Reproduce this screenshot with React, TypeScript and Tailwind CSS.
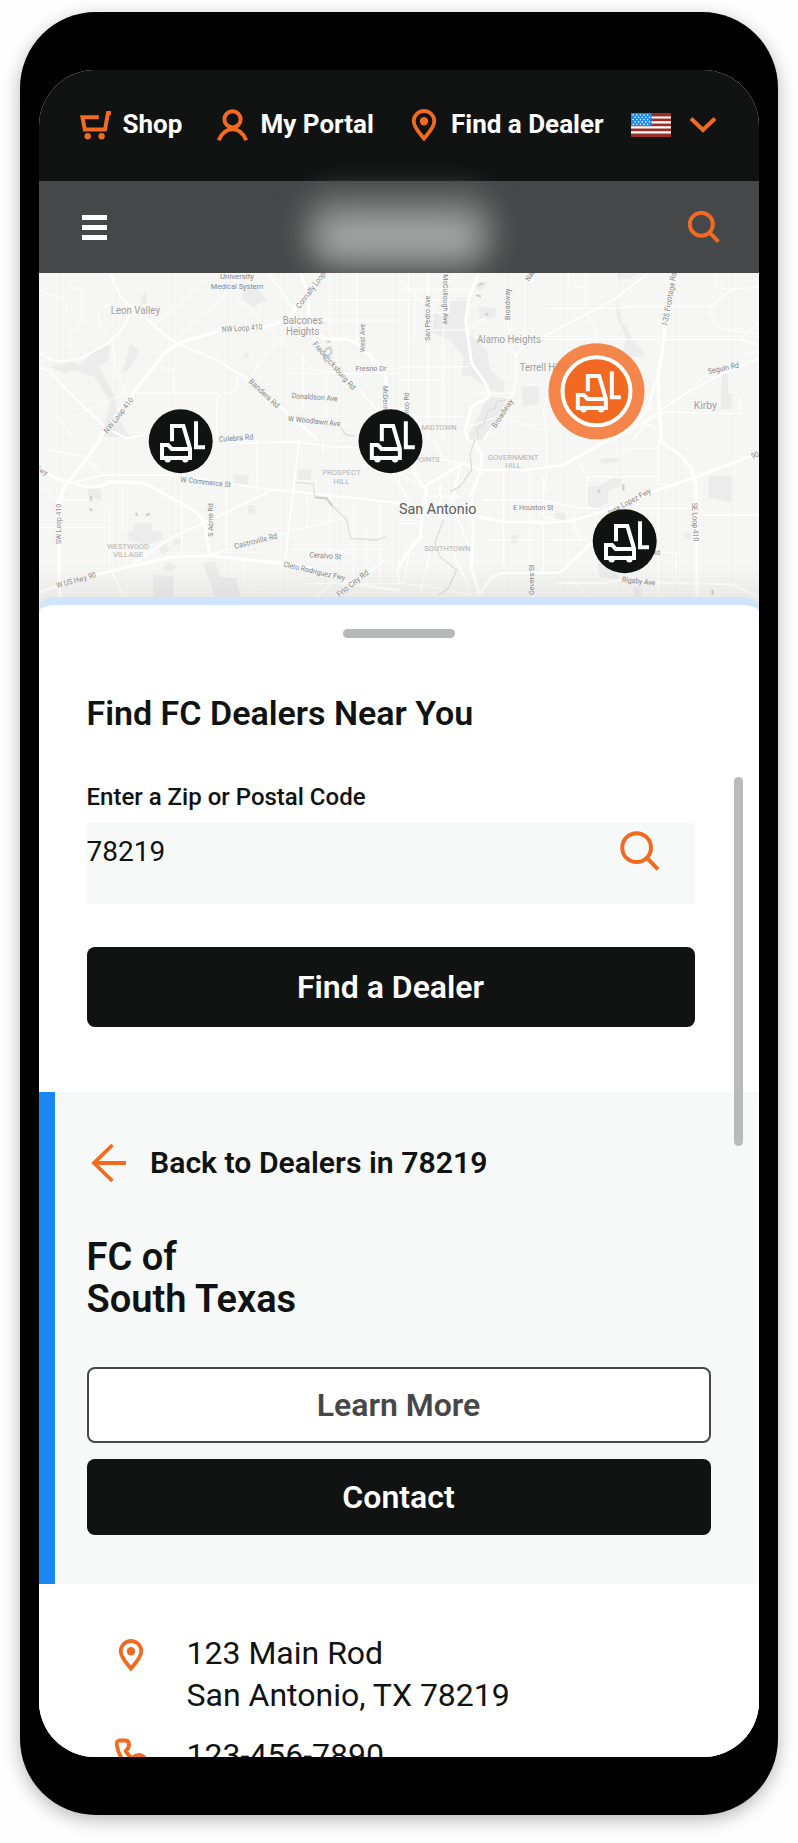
import type { ReactNode } from 'react';

type Label = {
  text: string;
  x: number;
  y: number;
  w: number;
  rot?: number;
  kind?: 'road' | 'town' | 'area' | 'city';
};

type Road = { d: string; w: number };

interface TileProps {
  x: number;
  y: number;
  roads: Road[];
  patches: string[];
  water?: string[];
}

const LABEL_STYLE = {
  road: { size: 23, fill: '#868686' },
  town: { size: 30, fill: '#9f9f9f' },
  area: { size: 21, fill: '#b3b3b3' },
  city: { size: 44, fill: '#5c5c5c' },
};

const nwRoads: Road[] = [
  { d: 'M205 510 L300 380 L395 260 Q425 228 460 215 L575 180 L660 172 Q735 170 762 150 L790 125 L880 15', w: 10 },
  { d: 'M812 10 L835 70 L835 130 Q850 205 900 208 L950 208 Q980 215 1010 245 L1060 300 Q1070 320 1068 350 V510', w: 9 },
  { d: 'M240 10 L275 85 L370 165 L430 215 L560 270 L650 325 L740 400 L800 455 L865 510', w: 6 },
  { d: 'M25 245 Q60 275 100 275 L160 262 L240 215 L270 185 L310 120 L280 90', w: 5 },
  { d: 'M25 290 L60 305 L130 380 L230 475 L290 505 L360 490', w: 5 },
  { d: 'M850 205 L910 290 L980 350 L1040 420', w: 5 },
  { d: 'M620 90 L680 135 L690 160 L740 200 L800 250 L850 300 L1000 315', w: 3 },
  { d: 'M715 10 L760 70 L790 120', w: 4 },
  { d: 'M430 215 L560 100 L640 10 M540 10 L430 120 L370 165', w: 3 },
  { d: 'M240 105 Q190 110 215 170 L250 210 L255 290 L285 370 L560 370 L580 390', w: 3 },
  { d: 'M25 60 L110 90 L110 130 M120 50 L155 60 V160 L120 190 V240', w: 3 },
  { d: 'M660 325 L690 275 L760 200 L800 120 M560 510 V380 L620 360 V300', w: 3 },
  { d: 'M430 370 V300 L390 290 M130 440 L285 370 M130 510 L80 430', w: 3 },
  { d: 'M900 10 V200 M980 10 V215 M900 90 H1110 M860 150 H1110 M820 250 V420 M890 300 V440 M770 310 H1110', w: 3 },
];

const neRoads: Road[] = [
  { d: 'M237 10 L208 80 L197 150 L205 210 L215 280 L250 330 Q275 370 262 385 L215 410 L195 480 L205 510', w: 9 },
  { d: 'M827 10 L797 150 L785 260 L775 310 V380 L785 510', w: 9 },
  { d: 'M775 315 L740 420 L700 470 L640 510', w: 8 },
  { d: 'M745 10 L640 90 L560 132 L420 205 L370 230 L345 260 L350 320 L340 370 L270 480 L250 510', w: 5 },
  { d: 'M1075 265 L940 325 L860 370 L790 415 L700 475', w: 5 },
  { d: 'M790 415 L850 375 L925 310 L1075 240', w: 3 },
  { d: 'M440 115 H640 L700 110 H940 Q960 75 1010 55', w: 4 },
  { d: 'M430 208 H1020 L1075 160 M1020 208 L1075 225', w: 4 },
  { d: 'M565 132 L590 190 V220 M555 10 V110 M505 10 V50 H560', w: 3 },
  { d: 'M85 10 V510 M25 10 V510 M130 10 V510 M45 60 V200 M325 150 V230 L350 260 M375 20 V220', w: 3 },
  { d: 'M0 60 H210 M0 90 H200 M100 180 H200 L260 140 M0 290 H210 M0 330 H130 M0 440 H190 M230 370 H340', w: 3 },
  { d: 'M700 510 L740 455 L800 425 L900 430 H1020 V380 M720 450 L770 480', w: 4 },
  { d: 'M930 110 Q930 170 980 180 L1075 190 M950 10 Q930 50 990 60 L1075 50 M440 510 L430 420 L440 380', w: 3 },
  { d: 'M0 30 L60 90 L130 140 M230 200 H470 M210 470 L290 440 L430 480', w: 3 },
];

const swRoads: Road[] = [
  { d: 'M210 0 L120 120 Q88 155 88 200 V470', w: 10 },
  { d: 'M25 85 L80 115 L130 130 Q200 155 240 125 L345 130 L490 210 Q530 240 530 290 L540 347', w: 9 },
  { d: 'M25 458 L150 415 L300 380 L420 352 L540 347 L640 358 L760 372 L850 385 L960 430 L1060 445 L1110 450', w: 9 },
  { d: 'M290 385 L430 290 L520 250 L725 150 L800 155 L1110 190', w: 6 },
  { d: 'M560 0 L640 10 L800 5 L900 20 L1110 25', w: 5 },
  { d: 'M808 0 L790 150 L765 370', w: 5 },
  { d: 'M245 395 L280 470 M85 420 L95 470', w: 5 },
  { d: 'M540 345 L620 320 L780 275 L940 235', w: 4 },
  { d: 'M860 470 L910 425 M920 470 L1065 360 M1110 360 Q1095 400 1110 430', w: 5 },
  { d: 'M215 105 H440 L600 130 L725 150 M120 130 L220 105 L160 50 L60 30', w: 4 },
  { d: 'M25 262 H238 V200 L200 180 H95 M238 262 V380 M278 130 V270 M455 150 V345', w: 3 },
  { d: 'M590 130 V340 M640 358 V430 L690 450 M680 0 V160 M900 160 V330 L960 340 M970 180 V440 M1050 190 V440 M830 170 V260', w: 3 },
  { d: 'M780 330 H1060 M820 430 H1110 M1010 260 V440 M880 0 V40 M25 140 Q60 150 85 185', w: 3 },
];

const seRoads: Road[] = [
  { d: 'M625 0 L490 75 L380 90 L240 90 L190 70 L80 135 L68 220 L60 290 L20 340 L0 380', w: 8 },
  { d: 'M215 0 L245 40 L240 100 L215 160 L220 270 L215 390 L240 465', w: 9 },
  { d: 'M150 215 L310 245 L440 248 Q500 248 540 235 L640 205 L760 155 L890 110 L1075 40', w: 8 },
  { d: 'M775 0 L840 45 Q885 90 887 130 L890 210 V470', w: 9 },
  { d: 'M240 460 L265 425 Q285 400 310 400 L470 398 Q490 395 500 380 L575 310 L600 290', w: 8 },
  { d: 'M470 430 L620 428 L680 415 L800 430 L990 432 L1075 470', w: 6 },
  { d: 'M120 135 V230 M75 170 H180 M180 80 L150 215 M35 90 L80 150 L75 220', w: 7 },
  { d: 'M250 180 H420 L540 205 H600 M430 250 V400 M430 110 V230 L520 250 L540 300', w: 4 },
  { d: 'M775 0 V130 L820 135 L890 110 M775 180 V470 M560 200 L560 110 H770 M720 205 H880 M890 225 H1075', w: 4 },
  { d: 'M775 337 H828 V430 M640 40 L700 25 H770 M530 60 L560 110 M440 0 V100 L430 170', w: 3 },
  { d: 'M390 90 V470 M310 90 V380 M250 300 H420 M440 300 H560 M0 430 L90 440 L210 465 M500 400 L560 470', w: 3 },
  { d: 'M70 290 L30 330 L10 430 M170 230 L210 330 M90 340 L60 460 M160 340 L210 450 M0 250 H60', w: 4 },
  { d: 'M0 100 L80 150 M20 0 V60 L60 110 M100 0 L130 60 L190 70 M-70 40 L-20 100 L30 190', w: 4 },
];

const nwPatches = [
  'M60 290 L120 275 L150 285 L190 245 L240 225 L235 270 L205 290 L225 320 L255 380 L260 440 L300 500 H215 L240 400 L195 320 L130 300 L110 312 Z',
  'M300 220 L330 240 L295 300 L275 310 L290 265 Z',
  'M640 60 L680 50 L710 90 L670 110 L635 85 Z',
  'M330 80 L350 70 L350 100 L335 105 Z',
  'M645 245 l12 5 l-5 18 l-10 -5 Z',
];

const nePatches = [
  'M150 90 L200 80 L195 190 L220 200 L260 240 L270 300 L315 340 L310 370 L270 360 L215 320 L185 315 L190 260 L150 210 L100 190 L100 130 L150 130 Z',
  'M225 40 L260 35 L250 60 L230 60 Z',
  'M235 110 L290 115 L285 145 L240 145 Z',
  'M650 80 L665 150 L700 210 L735 250 L730 262 L665 255 L680 205 L650 140 Z',
  'M365 350 H418 V400 L370 410 Z',
  'M965 310 H985 V370 H995 V417 H963 Z',
  'M260 380 L320 385 L300 430 L250 510 H200 L240 430 Z',
  'M650 10 H710 L690 28 H655 Z',
];

const swPatches = [
  'M175 145 H213 V185 H175 Z',
  'M310 250 H366 V275 H395 V300 L350 315 L295 300 V275 H310 Z',
  'M612 103 L656 105 L653 135 L610 132 Z',
  'M803 88 H843 V120 L805 118 Z',
  'M655 195 l18 0 l4 25 l-24 4 Z',
  'M370 405 L430 408 V470 H370 Z',
  'M520 370 L555 362 L570 410 L620 415 L630 470 H555 Z',
  'M415 365 L440 380 L420 395 L400 385 Z',
  'M385 320 l20 -10 l12 20 l-20 15 Z M430 300 l22 -5 v15 l-22 8 Z',
];

const sePatches = [
  'M562 142 L600 135 L640 115 L665 118 L660 140 L625 150 L625 185 L590 208 L562 195 Z',
  'M925 108 H995 V188 L925 172 Z',
  'M602 58 L655 52 L655 65 L605 70 Z',
  'M463 218 H495 V245 H463 Z',
  'M333 285 h22 v24 h-22 Z',
  'M590 360 L640 380 L660 420 L600 410 Z',
  'M852 278 h22 v18 h-22 Z',
  'M700 440 l20 0 l5 30 l-22 0 Z',
];

const tiles: TileProps[] = [
  {
    x: 30,
    y: 270,
    roads: nwRoads,
    patches: nwPatches,
    water: ['M890 215 l12 0 M885 240 l15 -8 l5 15 l-12 12 M880 262 l8 16', 'M935 475 l12 18 l25 5 M940 490 l20 8'],
  },
  {
    x: 400,
    y: 270,
    roads: neRoads,
    patches: nePatches,
    water: ['M235 45 l15 -5 M228 75 l15 5 M255 130 l10 5', 'M315 390 l-25 5 l-5 20 l-20 5 l-15 45 l-20 10 l5 30'],
  },
  {
    x: 30,
    y: 440,
    roads: swRoads,
    patches: swPatches,
    water: [
      'M183 168 v14 M180 205 l5 8 M320 218 v10 M348 226 l12 -6 M855 172 L890 175 L908 200',
      'M798 127 L850 132 L855 175 M910 200 L950 240 L962 295 L1040 300 L1070 290',
    ],
  },
  {
    x: 400,
    y: 440,
    roads: seRoads,
    patches: sePatches,
    water: [
      'M670 132 v20 M938 450 v14 M597 148 v10',
      'M225 0 L210 40 L215 90 L180 140 L150 155 M130 240 L105 310 L120 350 L170 390 L145 445 L115 465',
    ],
  },
];

const labels: { x: number; y: number; items: Label[] }[] = [
  {
    x: 30,
    y: 270,
    items: [
      { text: 'University', x: 621, y: 20, w: 102 },
      { text: 'Medical System', x: 621, y: 48, w: 158 },
      { text: 'Leon Valley', x: 316, y: 121, w: 148, kind: 'town' },
      { text: 'Balcones', x: 818, y: 151, w: 120, kind: 'town' },
      { text: 'Heights', x: 818, y: 186, w: 100, kind: 'town' },
      { text: 'NW Loop 410', x: 636, y: 174, w: 122, rot: -4 },
      { text: 'NW Loop 410', x: 265, y: 436, w: 128, rot: -52 },
      { text: 'Connally Loop', x: 842, y: 60, w: 130, rot: -53 },
      { text: 'Fredericksburg Rd', x: 913, y: 287, w: 184, rot: 49 },
      { text: 'West Ave', x: 996, y: 204, w: 84, rot: -90 },
      { text: 'Fresno Dr', x: 1023, y: 296, w: 93 },
      { text: 'Donaldson Ave', x: 854, y: 381, w: 138, rot: 4 },
      { text: 'W Woodlawn Ave', x: 853, y: 453, w: 158, rot: 6 },
      { text: 'Bandera Rd', x: 703, y: 370, w: 116, rot: 43 },
      { text: 'McDermott', x: 1068, y: 397, w: 98, rot: 90 },
      { text: 'Culebra Rd', x: 618, y: 504, w: 104, rot: -4 },
    ],
  },
  {
    x: 400,
    y: 270,
    items: [
      { text: 'San Pedro Ave', x: 83, y: 145, w: 135, rot: -90 },
      { text: 'McCullough Ave', x: 137, y: 88, w: 150, rot: 90 },
      { text: 'Broadway', x: 323, y: 103, w: 94, rot: -90 },
      { text: 'Broadway', x: 307, y: 430, w: 98, rot: -57 },
      { text: 'Nac', x: 390, y: 16, w: 36, rot: -57 },
      { text: 'Alamo Heights', x: 327, y: 208, w: 192, kind: 'town' },
      { text: 'Terrell Hills', x: 430, y: 292, w: 142, kind: 'town' },
      { text: 'I-35 Frontage Rd', x: 808, y: 86, w: 160, rot: -80 },
      { text: 'Seguin Rd', x: 970, y: 294, w: 95, rot: -12 },
      { text: 'Kirby', x: 916, y: 407, w: 70, kind: 'town' },
      { text: 'MIDTOWN', x: 117, y: 473, w: 105, kind: 'area' },
      { text: 'Blanco Rd', x: 18, y: 413, w: 92, rot: -90 },
    ],
  },
  {
    x: 30,
    y: 440,
    items: [
      { text: 'Fwy', x: 36, y: 92, w: 36, rot: 28 },
      { text: 'SW Loop 410', x: 86, y: 252, w: 120, rot: -90 },
      { text: 'W Commerce St', x: 527, y: 126, w: 152, rot: 6 },
      { text: 'S Acme Rd', x: 542, y: 240, w: 100, rot: -90 },
      { text: 'WESTWOOD', x: 294, y: 319, w: 125, kind: 'area' },
      { text: 'VILLAGE', x: 294, y: 344, w: 90, kind: 'area' },
      { text: 'PROSPECT', x: 934, y: 99, w: 115, kind: 'area' },
      { text: 'HILL', x: 934, y: 124, w: 48, kind: 'area' },
      { text: 'Castroville Rd', x: 677, y: 303, w: 132, rot: -14 },
      { text: 'Ceralvo St', x: 886, y: 347, w: 96, rot: 4 },
      { text: 'Cleto Rodriguez Fwy', x: 853, y: 393, w: 190, rot: 13 },
      { text: 'Frio City Rd', x: 968, y: 430, w: 114, rot: -38 },
      { text: 'W US Hwy 90', x: 138, y: 420, w: 122, rot: -16 },
    ],
  },
  {
    x: 400,
    y: 440,
    items: [
      { text: 'POINTS', x: 81, y: 59, w: 76, kind: 'area' },
      { text: 'GOVERNMENT', x: 339, y: 52, w: 152, kind: 'area' },
      { text: 'HILL', x: 339, y: 77, w: 48, kind: 'area' },
      { text: 'San Antonio', x: 113, y: 206, w: 232, kind: 'city' },
      { text: 'E Houston St', x: 400, y: 202, w: 120 },
      { text: 'SOUTHTOWN', x: 142, y: 327, w: 138, kind: 'area' },
      { text: 'N Gevers St', x: 394, y: 430, w: 112, rot: -90 },
      { text: 'Jose Lopez Fwy', x: 685, y: 186, w: 148, rot: -28 },
      { text: 'SE Loop 410', x: 886, y: 246, w: 115, rot: 88 },
      { text: 'Rigsby Ave', x: 716, y: 423, w: 100, rot: 6 },
      { text: 'Rd', x: 768, y: 338, w: 24 },
      { text: '90', x: 1065, y: 45, w: 23, rot: -18 },
    ],
  },
];

function MapTile({ x, y, roads, patches, water = [] }: TileProps) {
  return (
    <g transform={`translate(${x} ${y}) scale(0.33333)`}>
      {patches.map((d) => (
        <path key={d} d={d} fill="#ececed" />
      ))}
      <g fill="none" stroke="#fff" strokeLinejoin="round">
        {roads.map((road) => (
          <path key={road.d} d={road.d} strokeWidth={road.w} />
        ))}
      </g>
      {water.map((d, i) => (
        <path key={d} d={d} fill="none" stroke={i === 0 ? '#d3cfd0' : '#dedede'} strokeWidth={i === 0 ? 7 : 4} />
      ))}
    </g>
  );
}

function Forklift() {
  return (
    <g fill="none" stroke="#fff" strokeWidth="12">
      <path d="M-26 0 V-46 H8 L28 22 V50 H-56 V11 H-38 L-27 23 H28" />
      <path d="M46 -60 V18 H73" />
      <path d="M-39 53 v1 M14 53 v1" strokeWidth="19" strokeLinecap="round" />
    </g>
  );
}

function Pin({ x, y, active = false }: { x: number; y: number; active?: boolean }) {
  return (
    <g transform={`translate(${x} ${y}) scale(0.33333)`}>
      {active ? (
        <>
          <circle r="144" fill="#f47a38" fillOpacity="0.9" />
          <circle r="102" fill="#f26a21" stroke="#fff" strokeWidth="12" />
        </>
      ) : (
        <circle r="96" fill="#111312" />
      )}
      <Forklift />
    </g>
  );
}

function DealerMap() {
  return (
    <svg className="relative block h-[344px] w-[720px] shrink-0" viewBox="39 273 720 344">
      <defs>
        <pattern id="streets" width="7" height="8" patternUnits="userSpaceOnUse">
          <path d="M0 .5 H7 M.5 0 V8" stroke="#fff" strokeWidth="0.7" strokeOpacity="0.4" />
        </pattern>
        <linearGradient id="fade" x1="0" x2="0" y1="0" y2="1">
          <stop offset="0" stopColor="#000" stopOpacity="0" />
          <stop offset="1" stopColor="#000" stopOpacity="0.08" />
        </linearGradient>
      </defs>
      <rect x="38" y="273" width="722" height="344" fill="#f5f5f4" />
      <rect x="38" y="273" width="722" height="344" fill="url(#streets)" />
      {tiles.map((tile) => (
        <MapTile key={`${tile.x}-${tile.y}`} {...tile} />
      ))}
      <rect x="38" y="565" width="722" height="52" fill="url(#fade)" />
      {labels.map((group) => (
        <g
          key={`${group.x}-${group.y}`}
          transform={`translate(${group.x} ${group.y}) scale(0.33333)`}
          className="font-['Roboto',sans-serif]"
        >
          {group.items.map((l) => {
            const style = LABEL_STYLE[l.kind ?? 'road'];
            return (
              <text
                key={`${l.text}-${l.x}-${l.y}`}
                transform={`translate(${l.x} ${l.y}) rotate(${l.rot ?? 0})`}
                y={style.size * 0.35}
                fontSize={style.size}
                fill={style.fill}
                textAnchor="middle"
                textLength={l.w}
                lengthAdjust="spacingAndGlyphs"
              >
                {l.text}
              </text>
            );
          })}
        </g>
      ))}
      <Pin x={180.7} y={441.3} />
      <Pin x={390.5} y={441.3} />
      <Pin x={596.5} y={391.3} active />
      <Pin x={624.7} y={541.3} />
    </svg>
  );
}

function PinIcon() {
  return (
    <svg className="h-8 w-[26px] shrink-0" viewBox="0 0 26 32" fill="none">
      <path
        d="M13 29.5 C9 24.5 2.7 18.5 2.7 12.3 A10.3 10.3 0 0 1 23.3 12.3 C23.3 18.5 17 24.5 13 29.5 Z"
        stroke="#f26a21"
        strokeWidth="3.8"
      />
      <circle cx="13" cy="12.3" r="4.2" fill="#f26a21" />
    </svg>
  );
}

function CartIcon() {
  return (
    <svg className="h-8 w-8 shrink-0" viewBox="0 0 32 32" fill="none">
      <path d="M18.8 8.2 H2.4 L4.8 20.6 H25 L28 3.9 H31" stroke="#f26a21" strokeWidth="4" />
      <circle cx="7.7" cy="27.3" r="3.2" fill="#f26a21" />
      <circle cx="21.6" cy="27.3" r="3.2" fill="#f26a21" />
    </svg>
  );
}

function UserIcon() {
  return (
    <svg className="h-8 w-8 shrink-0" viewBox="0 0 32 32" fill="none" stroke="#f26a21" strokeWidth="4">
      <circle cx="15.5" cy="10.3" r="8.1" />
      <path d="M1.8 31.2 C5 23.5 10 20.2 15.5 20.2 C21 20.2 26 23.5 29.2 31.2" />
    </svg>
  );
}

function SearchIcon({ className, stroke }: { className: string; stroke: number }) {
  return (
    <svg className={className} viewBox="0 0 32 32" fill="none" stroke="#f26a21" strokeWidth={stroke}>
      <circle cx="13.3" cy="13.3" r="11.5" />
      <path d="M21.3 21.3 L30.4 30.6" />
    </svg>
  );
}

function FlagIcon() {
  const stars = [0, 1, 2, 3, 4].flatMap((row) =>
    [0, 1, 2, 3, 4].map((col) => ({ x: 2.2 + col * 3.6 + (row % 2) * 1.8, y: 2 + row * 2.3 })),
  );
  return (
    <svg className="h-6 w-10 shrink-0" viewBox="0 0 40 24">
      <rect width="40" height="24" fill="#9b2f27" />
      <path d="M0 4.5 H40 M0 9.3 H40 M0 14.4 H40 M0 19.3 H40" stroke="#fff" strokeWidth="2.2" />
      <rect width="20.5" height="13" fill="#1b87f3" />
      {stars.map((s) => (
        <circle key={`${s.x}-${s.y}`} cx={s.x} cy={s.y} r="0.8" fill="#fff" />
      ))}
    </svg>
  );
}

function NavItem({ icon, label, className }: { icon: ReactNode; label: string; className: string }) {
  return (
    <a className={`flex shrink-0 items-center ${className}`}>
      {icon}
      <span className="-mt-0.5 whitespace-nowrap text-[26px] font-bold leading-8 text-white">{label}</span>
    </a>
  );
}

export default function App() {
  return (
    <div className="h-[1843px] w-[798px] overflow-hidden bg-[#fefefe] pl-[19.5px] pt-[11.5px] font-['Roboto',sans-serif] text-[#111312]">
      <div className="h-[1803.5px] w-[758.5px] rounded-[76px] bg-black px-[19px] py-[58px] shadow-[0_5px_18px_rgba(0,0,0,0.28)]">
        <div className="relative flex h-[1687.5px] w-[720px] flex-col overflow-hidden rounded-[56px] bg-white">
          <nav className="flex h-[111.5px] shrink-0 items-center bg-[#111312] pl-[41px]">
            <NavItem className="w-[137px] gap-[11px]" icon={<CartIcon />} label="Shop" />
            <NavItem className="w-[194px] gap-3" icon={<UserIcon />} label="My Portal" />
            <NavItem className="w-[220px] gap-[14.5px]" icon={<PinIcon />} label="Find a Dealer" />
            <FlagIcon />
            <svg className="ml-[18px] h-[18px] w-7" viewBox="0 0 28 18" fill="none">
              <path d="M2 2.5 L14 14 L26 2.5" stroke="#f26a21" strokeWidth="4" />
            </svg>
          </nav>

          <header className="relative flex h-[92px] shrink-0 items-center justify-between bg-[#464748] pl-[43.5px] pr-[39px]">
            <div className="flex w-[25px] flex-col gap-[5px]">
              <span className="h-[5px] bg-white" />
              <span className="h-[5px] bg-white" />
              <span className="h-[5px] bg-white" />
            </div>
            <div className="absolute left-[262px] top-[12px] h-[80px] w-[196px] rounded-[34px] bg-[#747675] blur-[14px]" />
            <div className="absolute left-[282px] top-[37px] h-[38px] w-[156px] rounded-[18px] bg-[#a3a5a4] blur-[13px]" />
            <SearchIcon className="h-8 w-8" stroke={4} />
          </header>

          <DealerMap />

          <main className="relative -mt-5 flex grow flex-col bg-[#cfe5fd] pt-2 [border-radius:17px_17px_0_0/12px_12px_0_0]">
            <div className="flex grow flex-col bg-white [border-radius:17px_17px_0_0/7px_7px_0_0]">
              <div className="mx-auto mt-6 h-[9px] w-28 shrink-0 rounded-full bg-[#b6b7b8]" />

              <section className="flex h-[453.5px] shrink-0 flex-col px-12 pt-[55px]">
                <h1 className="text-[34px] font-semibold leading-10">Find FC Dealers Near You</h1>
                <label className="mt-[48px] text-[24px] font-medium leading-8">Enter a Zip or Postal Code</label>
                <div className="mt-[10px] flex h-[80.5px] w-[608px] shrink-0 justify-between bg-[#f7f9f8] pr-[35px]">
                  <span className="pt-[13px] text-[28px] leading-8">78219</span>
                  <SearchIcon className="mt-2 h-10 w-10" stroke={3.2} />
                </div>
                <button className="mt-[43px] h-20 w-[608px] shrink-0 rounded-lg bg-[#111312] text-[32px] font-semibold text-white">
                  Find a Dealer
                </button>
              </section>

              <section className="h-[492px] shrink-0 border-l-[16px] border-[#1a87f3] bg-[#f7f9f8] pl-8">
                <div className="flex h-[143px] items-center">
                  <svg className="ml-[4.5px] h-10 w-9" viewBox="0 0 36 40" fill="none" stroke="#f26a21" strokeWidth="3.8">
                    <path d="M21.5 2 L3 20 L21.5 38 M3 20 H35" />
                  </svg>
                  <span className="ml-[23px] text-[30.2px] font-semibold leading-9">Back to Dealers in 78219</span>
                </div>
                <h2 className="pt-px text-[38px] font-semibold leading-[42px]">
                  FC of
                  <br />
                  South Texas
                </h2>
                <button className="mt-[47px] block h-[76px] w-[624px] rounded-lg border-2 border-[#464748] bg-white text-[32px] font-semibold text-[#464748]">
                  Learn More
                </button>
                <button className="mt-4 block h-[76px] w-[624px] rounded-lg bg-[#111312] text-[32px] font-semibold text-white">
                  Contact
                </button>
              </section>

              <section className="flex flex-col gap-[18px] pl-[76px] pt-12 text-[32px] leading-[42px]">
                <div className="flex gap-9">
                  <div className="flex w-9 pl-[3px] pt-[7px]">
                    <PinIcon />
                  </div>
                  <p>
                    123 Main Rod
                    <br />
                    San Antonio, TX 78219
                  </p>
                </div>
                <div className="flex gap-9">
                  <div className="w-9 pt-1">
                    <svg className="h-8 w-8" viewBox="0 0 32 32" fill="none" stroke="#f26a21" strokeWidth="3.8">
                      <path d="M4 2.5 H10 Q13.8 2.5 14 6 Q14.3 10 10.8 13 Q13.5 18 17 20 Q21 16.5 25 17 Q30 18 30 22 V27 Q29 30 25 30 Q6 29 2 8 Q1 3 4 2.5 Z" />
                    </svg>
                  </div>
                  <p>123-456-7890</p>
                </div>
              </section>
            </div>
          </main>

          <div className="absolute left-[695px] top-[707px] h-[369px] w-[9px] rounded-full bg-[#b9baba]" />
        </div>
      </div>
    </div>
  );
}
